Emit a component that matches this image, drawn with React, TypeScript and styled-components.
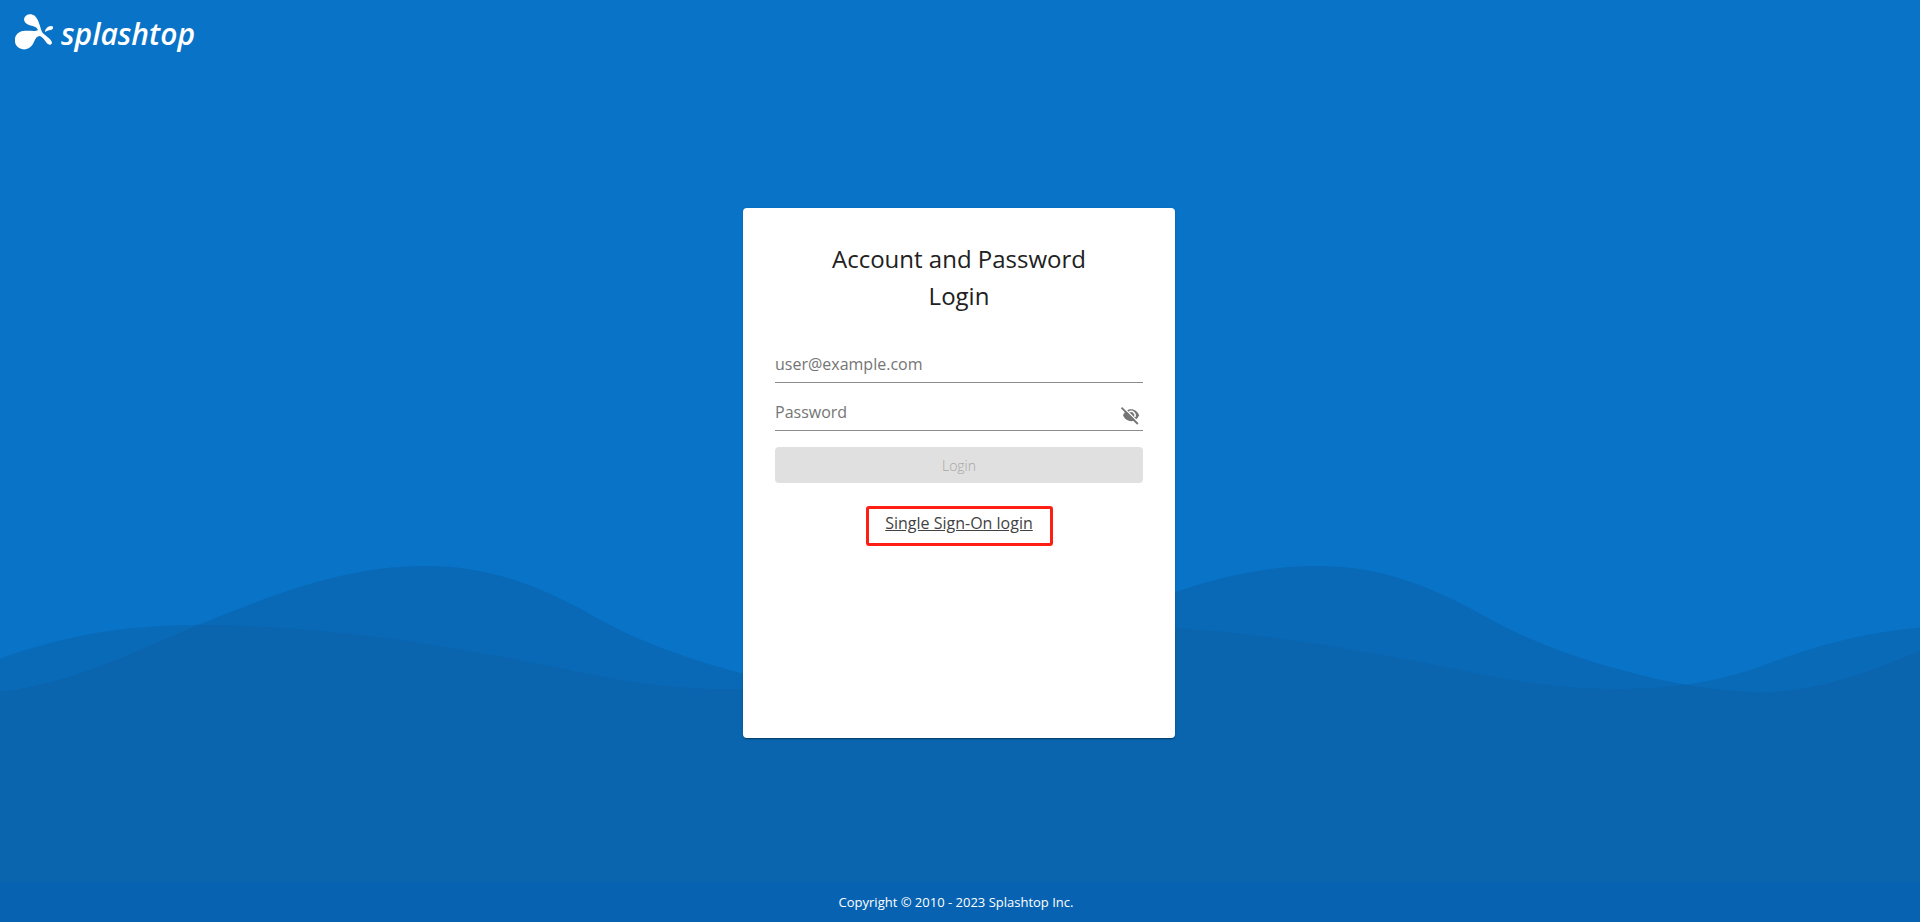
import React, { useState } from "react";
import styled, { createGlobalStyle } from "styled-components";
import { MdVisibility } from "react-icons/md";

const GlobalStyle = createGlobalStyle`
  *, *::before, *::after { box-sizing: border-box; }
  body {
    margin: 0;
    background: #0873c7;
    font-family: "Open Sans", "Noto Sans", sans-serif;
    font-size: 16px;
    color: #212121;
  }
`;

const Page = styled.div`
  position: relative;
  isolation: isolate;
  display: flex;
  flex-direction: column;
  min-height: 100vh;
`;

const Waves = styled.svg`
  position: absolute;
  z-index: -1;
  left: 0;
  bottom: 0;
  width: 100%;
  height: 356px;
`;

const Header = styled.header`
  display: flex;
  align-items: center;
  height: 64px;
  padding: 0 15px;
`;

const Brand = styled.a`
  display: flex;
  align-items: center;
  gap: 8px;
  color: #fff;
  text-decoration: none;
`;

const BrandName = styled.span`
  padding-top: 3px;
  font-family: "Open Sans", sans-serif;
  font-size: 30px;
  font-style: italic;
  font-weight: 600;
  line-height: 36px;
`;

const Main = styled.main`
  flex: 1;
  display: flex;
  align-items: center;
  justify-content: center;
  padding: 0 2px 0 0;
`;

const Card = styled.section`
  width: 432px;
  max-width: 100%;
  min-height: 530px;
  padding: 32px;
  border-radius: 4px;
  background: #fff;
  box-shadow: 0 2px 1px -1px rgba(0, 0, 0, 0.2), 0 1px 1px rgba(0, 0, 0, 0.14),
    0 1px 3px rgba(0, 0, 0, 0.12);
`;

const Title = styled.h1`
  margin: 0 0 32px;
  padding: 0 48px;
  font-size: 24px;
  font-weight: 400;
  line-height: 37px;
  text-align: center;
`;

const Form = styled.form`
  display: flex;
  flex-direction: column;
  gap: 11px;
`;

const Field = styled.label`
  display: flex;
  align-items: center;
  height: 37px;
  border-bottom: 1px solid #8c8c8c;
`;

const TextInput = styled.input`
  flex: 1;
  min-width: 0;
  padding: 0;
  border: 0;
  outline: 0;
  background: none;
  color: inherit;
  font: inherit;
  line-height: 24px;
  &::placeholder {
    color: #757575;
    opacity: 1;
  }
`;

const IconButton = styled.button`
  display: flex;
  align-self: flex-end;
  padding: 4px 3px;
  border: 0;
  background: none;
  color: #757575;
  font-size: 20px;
  cursor: pointer;
`;

const SubmitButton = styled.button`
  height: 36px;
  margin-top: 5px;
  border: 0;
  border-radius: 4px;
  background: #e0e0e0;
  color: #a6a6a6;
  font: inherit;
  font-size: 14px;
  font-weight: 300;
`;

const Highlight = styled.div`
  width: 187px;
  margin: 23px auto 0;
  padding: 2px 0 8px;
  border: 3px solid #ff1e14;
  border-radius: 3px;
  text-align: center;
`;

const SsoLink = styled.a`
  color: #424242;
  line-height: 24px;
`;

const Footer = styled.footer`
  padding: 0 8px 0 0;
  background: #0763b2;
  color: #fff;
  font-size: 13px;
  line-height: 40px;
  text-align: center;
`;

function Mark() {
  return (
    <svg width="38" height="36" viewBox="0 0 38 36" fill="#fff" aria-hidden="true">
      <path d="M9 5C10 0 16-1 20 2C24 6 25 13 27 18C29 21 37 25 37 29C36 32 33 31 31 28C29 25 27 23 25 22C21 22 20 26 18 30C14 37 5 37 1 31C-2 25 1 18 8 17C14 16 20 18 23 16C22 13 18 12 14 11C11 10 9 8 9 5Z" />
      <path d="M30 18C30 15 33 12 36 12C39 12 39 15 36 16C33 16 32 17 30 18Z" />
    </svg>
  );
}

function HiddenEye() {
  return (
    <svg width="20" height="20" viewBox="0 0 20 20" fill="none" aria-hidden="true">
      <path d="M3 9.3C5 5 8 3.2 11.2 3.2C14.5 3.2 17.600 5.400 19.200 9.300C17.600 13.200 14.500 15.200 11.200 15.200C8 15.200 4.800 13.400 3 9.300Z" fill="currentColor" />
      <path d="M9.200 5.900A4 4 0 0 1 14.800 11" stroke="#fff" strokeWidth="1.500" />
      <path d="M3 1L19 17" stroke="#fff" strokeWidth="1.500" />
      <path d="M1.500 1.700L17.800 18" stroke="currentColor" strokeWidth="1.800" />
    </svg>
  );
}

export default function App() {
  const [visible, setVisible] = useState(false);
  return (
    <>
      <GlobalStyle />
      <Page>
        <Waves viewBox="0 566 1920 356" preserveAspectRatio="none" aria-hidden="true">
          <path
            fill="#0969b6"
            d="M-19 692C55 692 130 653 198 625C275 594 345 566 425 566C490 566 540 586 595 617C663 656 785 692 872 692C946 692 1021 653 1089 625C1166 594 1236 566 1316 566C1381 566 1431 586 1486 617C1554 656 1676 692 1763 692C1837 692 1912 653 1980 625V922H-19Z"
          />
          <path
            fill="#0d60a5"
            fillOpacity="0.42"
            d="M-12 663C55 638 115 625 198 625C330 625 450 646 560 668C620 681 670 689 724 689C785 689 832 681 879 663C946 638 1006 625 1089 625C1221 625 1341 646 1451 668C1511 681 1561 689 1615 689C1676 689 1723 681 1770 663C1837 638 1897 625 1980 625V922H-12Z"
          />
        </Waves>
        <Header>
          <Brand href="#" aria-label="splashtop">
            <Mark />
            <BrandName>splashtop</BrandName>
          </Brand>
        </Header>
        <Main>
          <Card>
            <Title>Account and Password Login</Title>
            <Form onSubmit={(e) => e.preventDefault()}>
              <Field>
                <TextInput type="email" placeholder="user@example.com" aria-label="Email" />
              </Field>
              <Field>
                <TextInput
                  type={visible ? "text" : "password"}
                  placeholder="Password"
                  aria-label="Password"
                />
                <IconButton
                  type="button"
                  aria-label="Toggle password visibility"
                  onClick={() => setVisible(!visible)}
                >
                  {visible ? <MdVisibility /> : <HiddenEye />}
                </IconButton>
              </Field>
              <SubmitButton type="submit" disabled>
                Login
              </SubmitButton>
            </Form>
            <Highlight>
              <SsoLink href="#">Single Sign-On login</SsoLink>
            </Highlight>
          </Card>
        </Main>
        <Footer>Copyright © 2010 - 2023 Splashtop Inc.</Footer>
      </Page>
    </>
  );
}
